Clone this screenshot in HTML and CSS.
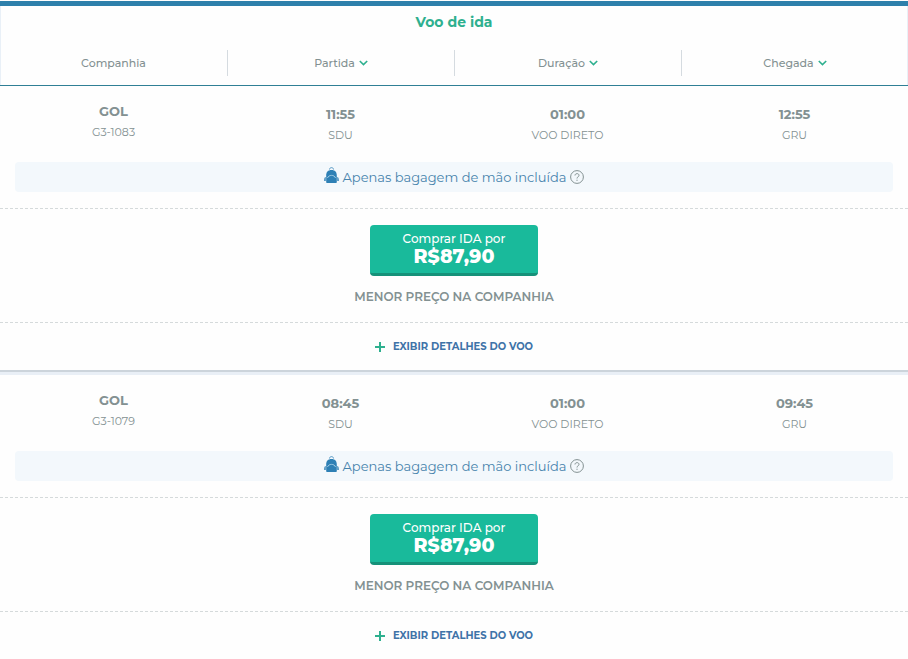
FILE: index.html
```html
<!DOCTYPE html>
<html lang="pt-BR">
<head>
<meta charset="utf-8">
<meta name="viewport" content="width=device-width, initial-scale=1">
<title>Voo de ida</title>
<link rel="stylesheet" href="styles.css">
</head>
<body>
<svg class="sprite" aria-hidden="true">
  <symbol id="chevron" viewBox="0 0 9 6"><path d="M.8 1l3.700 3.600L8.200 1" fill="none" stroke="currentColor" stroke-width="1.600"/></symbol>
  <symbol id="plus" viewBox="0 0 10 10"><path d="M5 0v10M0 5h10" fill="none" stroke="currentColor" stroke-width="2"/></symbol>
  <symbol id="backpack" viewBox="0 0 15 17">
    <path d="M5.500 2.500C5.500 0 9.500 0 9.500 2.500" fill="none" stroke="currentColor" stroke-width=".8"/>
    <path d="M2.200 9C2 5 4 3 7.500 3S13 5 12.800 9v6c0 .7-.4 1-1 1H3.200c-.6 0-1-.3-1-1z" fill="currentColor"/>
    <path d="M1.700 10C.6 10.300.2 11 .2 14h1.500zM13.300 10c1.100.3 1.500 1 1.500 4h-1.500z" fill="currentColor"/>
    <path d="M3.500 11C4.500 7.500 10.500 7.500 11.500 11" fill="none" stroke="#a9d0e6" stroke-width=".9"/>
  </symbol>
  <symbol id="help" viewBox="0 0 14 14">
    <circle cx="7" cy="7" r="6.400" fill="none" stroke="currentColor"/>
    <path d="M5 5.500C5 3 9 3 9 5.400 9 6.900 7 6.700 7 8.500M7 9.700v1.200" fill="none" stroke="currentColor"/>
  </symbol>
</svg>
<main>
  <header class="header">
    <h1 class="title">Voo de ida</h1>
    <div class="columns">
      <div class="column">Companhia</div>
      <div class="column"><button class="sort" type="button">Partida <svg class="chevron"><use href="#chevron"/></svg></button></div>
      <div class="column"><button class="sort" type="button">Duração <svg class="chevron"><use href="#chevron"/></svg></button></div>
      <div class="column"><button class="sort" type="button">Chegada <svg class="chevron"><use href="#chevron"/></svg></button></div>
    </div>
  </header>

  <article class="flight">
    <div class="summary">
      <div class="cell airline"><strong>GOL</strong><span>G3-1083</span></div>
      <div class="cell"><strong>11:55</strong><span>SDU</span></div>
      <div class="cell"><strong>01:00</strong><span>VOO DIRETO</span></div>
      <div class="cell"><strong>12:55</strong><span>GRU</span></div>
    </div>
    <div class="baggage">
      <svg class="backpack" aria-hidden="true"><use href="#backpack"/></svg>
      <span>Apenas bagagem de mão incluída</span>
      <button class="help" type="button" aria-label="Ajuda"><svg><use href="#help"/></svg></button>
    </div>
    <div class="offer">
      <button class="buy" type="button"><span>Comprar IDA por</span><strong>R$87,90</strong></button>
      <p class="note">MENOR PREÇO NA COMPANHIA</p>
    </div>
    <div class="more"><a class="details" href="#"><svg class="plus"><use href="#plus"/></svg>EXIBIR DETALHES DO VOO</a></div>
  </article>

  <article class="flight">
    <div class="summary">
      <div class="cell airline"><strong>GOL</strong><span>G3-1079</span></div>
      <div class="cell"><strong>08:45</strong><span>SDU</span></div>
      <div class="cell"><strong>01:00</strong><span>VOO DIRETO</span></div>
      <div class="cell"><strong>09:45</strong><span>GRU</span></div>
    </div>
    <div class="baggage">
      <svg class="backpack" aria-hidden="true"><use href="#backpack"/></svg>
      <span>Apenas bagagem de mão incluída</span>
      <button class="help" type="button" aria-label="Ajuda"><svg><use href="#help"/></svg></button>
    </div>
    <div class="offer">
      <button class="buy" type="button"><span>Comprar IDA por</span><strong>R$87,90</strong></button>
      <p class="note">MENOR PREÇO NA COMPANHIA</p>
    </div>
    <div class="more"><a class="details" href="#"><svg class="plus"><use href="#plus"/></svg>EXIBIR DETALHES DO VOO</a></div>
  </article>
</main>
</body>
</html>
```
FILE: styles.css
```css
* {
  box-sizing: border-box;
}

body {
  margin: 0;
  padding-top: 1px;
  background: #fefefe;
  color: #839192;
  font-family: Montserrat, Inter, "Open Sans", sans-serif;
  font-size: 11px;
  line-height: 16px;
}

button {
  padding: 0;
  border: 0;
  background: none;
  color: inherit;
  font: inherit;
  cursor: pointer;
}

.sprite {
  display: none;
}

.header {
  border-top: 5px solid #2e80ab;
  border-bottom: 1px solid #2f7f95;
  box-shadow: inset 1px 0 #e9f0f7, inset -1px 0 #e9f0f7;
}

.title {
  margin: 0;
  padding-top: 6px;
  color: #2eb08f;
  font-size: 14px;
  font-weight: 700;
  line-height: 20px;
  text-align: center;
}

.columns,
.summary {
  display: grid;
  grid-template-columns: repeat(4, 1fr);
  text-align: center;
}

.columns {
  padding: 18px 0 9px;
  font-weight: 500;
}

.column {
  height: 26px;
  line-height: 26px;
}

.column + .column {
  border-left: 1px solid #d5dbe0;
}

.sort {
  display: inline-flex;
  align-items: center;
  gap: 4px;
}

.chevron {
  width: 9px;
  height: 6px;
  color: #2eb08f;
}

.flight {
  border-bottom: 2px solid #ccd4db;
  box-shadow: 0 3px 0 #e9eff6;
  margin-bottom: 3px;
}

.flight:last-child {
  border-bottom: 0;
  box-shadow: none;
  margin-bottom: 0;
}

.summary {
  height: 76px;
  padding-top: 17px;
}

.cell {
  display: flex;
  flex-direction: column;
  gap: 5px;
}

.cell strong {
  font-size: 13px;
}

.cell:not(.airline) {
  padding-top: 3px;
}

.baggage {
  display: flex;
  align-items: center;
  justify-content: center;
  gap: 4px;
  height: 30px;
  margin: 0 15px 16px;
  border-radius: 4px;
  background: #f3f8fc;
  color: #4783ac;
  font-size: 13px;
}

.backpack {
  width: 15px;
  height: 17px;
  margin-bottom: 4px;
  color: #2e80b5;
}

.help {
  color: #839192;
}

.help svg {
  display: block;
  width: 14px;
  height: 14px;
}

.offer,
.more {
  border-top: 1px dashed #d5dadb;
}

.offer {
  padding: 16px 0 17px;
  text-align: center;
}

.buy {
  width: 168px;
  height: 51px;
  border-bottom: 3px solid #169179;
  border-radius: 4px;
  background: #19ba9b;
  color: #fff;
  font-size: 12px;
  font-weight: 500;
}

.buy span,
.buy strong {
  display: block;
}

.buy strong {
  font-size: 19px;
  font-weight: 800;
  line-height: 20px;
}

.note {
  margin: 13px 0 0;
  font-size: 12px;
  font-weight: 600;
}

.more {
  display: flex;
  align-items: center;
  justify-content: center;
  height: 48px;
}

.details {
  display: flex;
  align-items: center;
  gap: 8px;
  color: #3e73a8;
  font-size: 10px;
  font-weight: 700;
  text-decoration: none;
}

.plus {
  width: 10px;
  height: 10px;
  color: #2eb08f;
}
```
